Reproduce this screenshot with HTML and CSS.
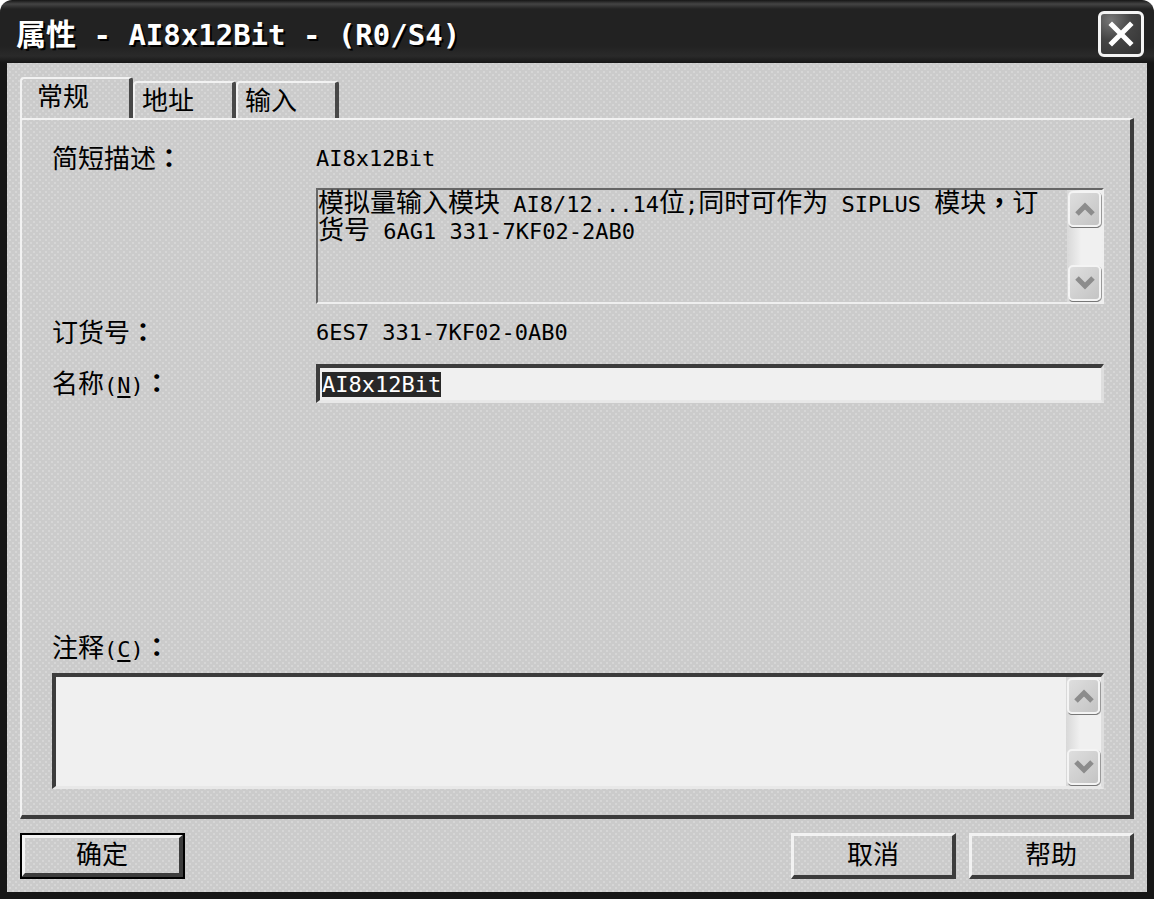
FILE: index.html
```html
<!DOCTYPE html>
<html lang="zh-CN">
<head>
<meta charset="utf-8">
<title>属性 - AI8x12Bit - (R0/S4)</title>
<link rel="stylesheet" href="styles.css">
</head>
<body>
<main class="window">
  <header class="titlebar">
    <h1 class="title">属性<span class="title-latin"> - AI8x12Bit - (R0/S4)</span></h1>
    <button class="close" type="button" aria-label="关闭">
      <svg viewBox="0 0 40 40" width="40" height="40" aria-hidden="true"><path d="M11 11L29 29M29 11L11 29" fill="none" stroke="#fff" stroke-width="5" stroke-linecap="square"/></svg>
    </button>
  </header>
  <form class="client">
    <div class="tabs" role="tablist">
      <button class="tab tab-active" type="button" role="tab" aria-selected="true">常规</button>
      <button class="tab" type="button" role="tab" aria-selected="false">地址</button>
      <button class="tab" type="button" role="tab" aria-selected="false">输入</button>
    </div>
    <section class="panel" role="tabpanel">
      <div class="fields">
        <span class="label" id="short-label">简短描述<span class="punct" lang="zh-TW">：</span></span>
        <span class="latin">AI8x12Bit</span>
        <div class="box description">
          <div class="description-text" role="textbox" aria-readonly="true" aria-multiline="true" aria-labelledby="short-label" tabindex="0">模拟量输入模块<span class="latin"> AI8/12...14</span>位<span class="latin">;</span>同时可作为<span class="latin"> SIPLUS </span>模块<span class="punct" lang="zh-TW">，</span>订货号<span class="latin"> 6AG1 331-7KF02-2AB0</span></div>
          <div class="scrollbar">
            <button class="arrow" type="button" aria-label="向上滚动"><svg viewBox="0 0 20 14" width="20" height="14"><path d="M2 12L10 4L18 12" /></svg></button>
            <button class="arrow" type="button" aria-label="向下滚动"><svg viewBox="0 0 20 14" width="20" height="14"><path d="M2 2L10 10L18 2" /></svg></button>
          </div>
        </div>
        <span class="label order">订货号<span class="punct" lang="zh-TW">：</span></span>
        <span class="latin order">6ES7 331-7KF02-0AB0</span>
        <label class="label" for="name">名称<span class="latin">(<u>N</u>)</span><span class="punct" lang="zh-TW">：</span></label>
        <input class="box sunken name" id="name" type="text" value="AI8x12Bit" accesskey="n" spellcheck="false" autofocus>
      </div>
      <div class="comment-group">
        <label class="label" for="comment">注释<span class="latin">(<u>C</u>)</span><span class="punct" lang="zh-TW">：</span></label>
        <div class="box sunken comment">
          <textarea class="comment-input" id="comment" accesskey="c"></textarea>
          <div class="scrollbar">
            <button class="arrow" type="button" aria-label="向上滚动"><svg viewBox="0 0 20 14" width="20" height="14"><path d="M2 12L10 4L18 12" /></svg></button>
            <button class="arrow" type="button" aria-label="向下滚动"><svg viewBox="0 0 20 14" width="20" height="14"><path d="M2 2L10 10L18 2" /></svg></button>
          </div>
        </div>
      </div>
    </section>
    <footer class="actions">
      <button class="button button-default" type="submit">确定</button>
      <button class="button cancel" type="button">取消</button>
      <button class="button" type="button">帮助</button>
    </footer>
  </form>
</main>
<script src="main.js"></script>
</body>
</html>
```
FILE: main.js
```js
const nameField = document.getElementById("name");
nameField.focus();
nameField.select();
```
FILE: styles.css
```css
* { box-sizing: border-box; }

body {
  margin: 0;
  background: #fff;
  color: #000;
  font: 26px/30px "Liberation Sans", "Noto Sans CJK SC", sans-serif;
}

button, input, textarea { font: inherit; color: inherit; margin: 0; border-radius: 0; }
button { padding: 0; }

.window {
  display: flex;
  flex-direction: column;
  min-height: 100vh;
  padding: 0 7px 7px;
  border-radius: 12px 12px 0 0;
  background: linear-gradient(#161616 0, #444 4px, #222 9px, #222 46px, #2a2a2a 56px, #161616 63px, #161616 100%);
}

.titlebar {
  display: flex;
  align-items: center;
  justify-content: space-between;
  height: 63px;
  padding: 4px 3px 0 9px;
}

.title {
  margin: 0;
  padding-top: 2px;
  color: #fff;
  font-size: 30px;
  line-height: 40px;
  font-weight: 700;
  text-shadow: 2px 2px 0 #000;
  white-space: pre;
}
.title-latin { font-family: "DejaVu Sans Mono", monospace; font-size: 29px; }

.close {
  display: grid;
  place-items: center;
  width: 46px;
  height: 46px;
  border: 3px solid #f4f4f4;
  border-radius: 6px;
  background: radial-gradient(circle at 25% 15%, #777, #444 45%, #333);
}

.client {
  flex: 1;
  display: flex;
  flex-direction: column;
  padding: 14px 13px 13px;
  background-color: #cbcbcb;
  background-image: radial-gradient(#d6d6d6 1px, transparent 1px), radial-gradient(#d6d6d6 1px, transparent 1px);
  background-position: 0 0, 3px 3px;
  background-size: 6px 6px;
}

.tabs { display: flex; align-items: flex-end; }
.tab {
  width: 103px;
  height: 37px;
  padding-left: 7px;
  border: solid;
  border-width: 2px 4px 0 2px;
  border-color: #f2f2f2 #484848 #f2f2f2 #f2f2f2;
  border-radius: 4px 3px 0 0;
  background: none;
  text-align: left;
}
.tab-active {
  width: 113px;
  height: 41px;
  padding: 0 0 4px 15px;
}

.panel {
  flex: 1;
  display: flex;
  flex-direction: column;
  justify-content: space-between;
  gap: 24px;
  padding: 24px 26px 26px 30px;
  border: solid;
  border-width: 2px 4px 4px 2px;
  border-color: #f2f2f2 #3c3c3c #3c3c3c #f2f2f2;
}

.fields {
  display: grid;
  grid-template-columns: 264px 1fr;
  align-items: center;
}
.latin { font-family: "DejaVu Sans Mono", monospace; font-size: 22px; }
.punct { font-family: "Noto Sans CJK TC", sans-serif; font-weight: 700; line-height: 20px; }
.label .latin, .description-text .latin { line-height: 20px; }
.label u { text-decoration-thickness: 2px; text-underline-offset: 3px; }

.box {
  border: 2px solid;
  border-color: #666 #efefef #efefef #666;
}
.sunken {
  border-width: 4px 3px 3px 4px;
  border-color: #3c3c3c #dedede #e8e8e8 #3c3c3c;
  background: #f0f0f0;
}

.description {
  grid-column: 2;
  display: flex;
  height: 116px;
  margin: 14px 0;
}
.description-text {
  flex: 1;
  line-height: 27px;
  white-space: pre-wrap;
  word-break: break-all;
  padding-right: 26px;
  outline: 0;
}

.order { margin-bottom: 16px; }
.name {
  width: 100%;
  height: 39px;
  padding: 0 2px;
  font: 22px/28px "DejaVu Sans Mono", monospace;
  outline: 0;
}
.name::selection { background: #282828; color: #fff; }

.scrollbar {
  display: flex;
  flex-direction: column;
  justify-content: space-between;
  width: 35px;
  padding: 1px;
  background: linear-gradient(90deg, #d8d8d8, #f0f0f0 40%);
}
.arrow {
  display: grid;
  place-items: center;
  height: 36px;
  border: 2px solid #f4f4f4;
  border-radius: 5px;
  background: linear-gradient(135deg, #dedede, #c4c4c4);
  box-shadow: 0 2px 0 -1px #777, 1px 1px 0 #999;
}
.arrow path { fill: none; stroke: #8c8c8c; stroke-width: 5; }

.comment-group { display: grid; gap: 10px; }
.comment { display: flex; height: 116px; }
.comment-input {
  flex: 1;
  padding: 2px;
  border: 0;
  background: none;
  resize: none;
  overflow: hidden;
  outline: 0;
}

.actions { display: flex; gap: 13px; margin-top: 14px; }
.button {
  width: 165px;
  height: 46px;
  padding-bottom: 2px;
  border: solid;
  border-width: 3px 4px 4px 3px;
  border-color: #f2f2f2 #3c3c3c #3c3c3c #f2f2f2;
  background: none;
}
.button-default { outline: 2px solid #000; outline-offset: -2px; border-width: 5px 6px 6px 5px; }
.cancel { margin-left: auto; }
```
